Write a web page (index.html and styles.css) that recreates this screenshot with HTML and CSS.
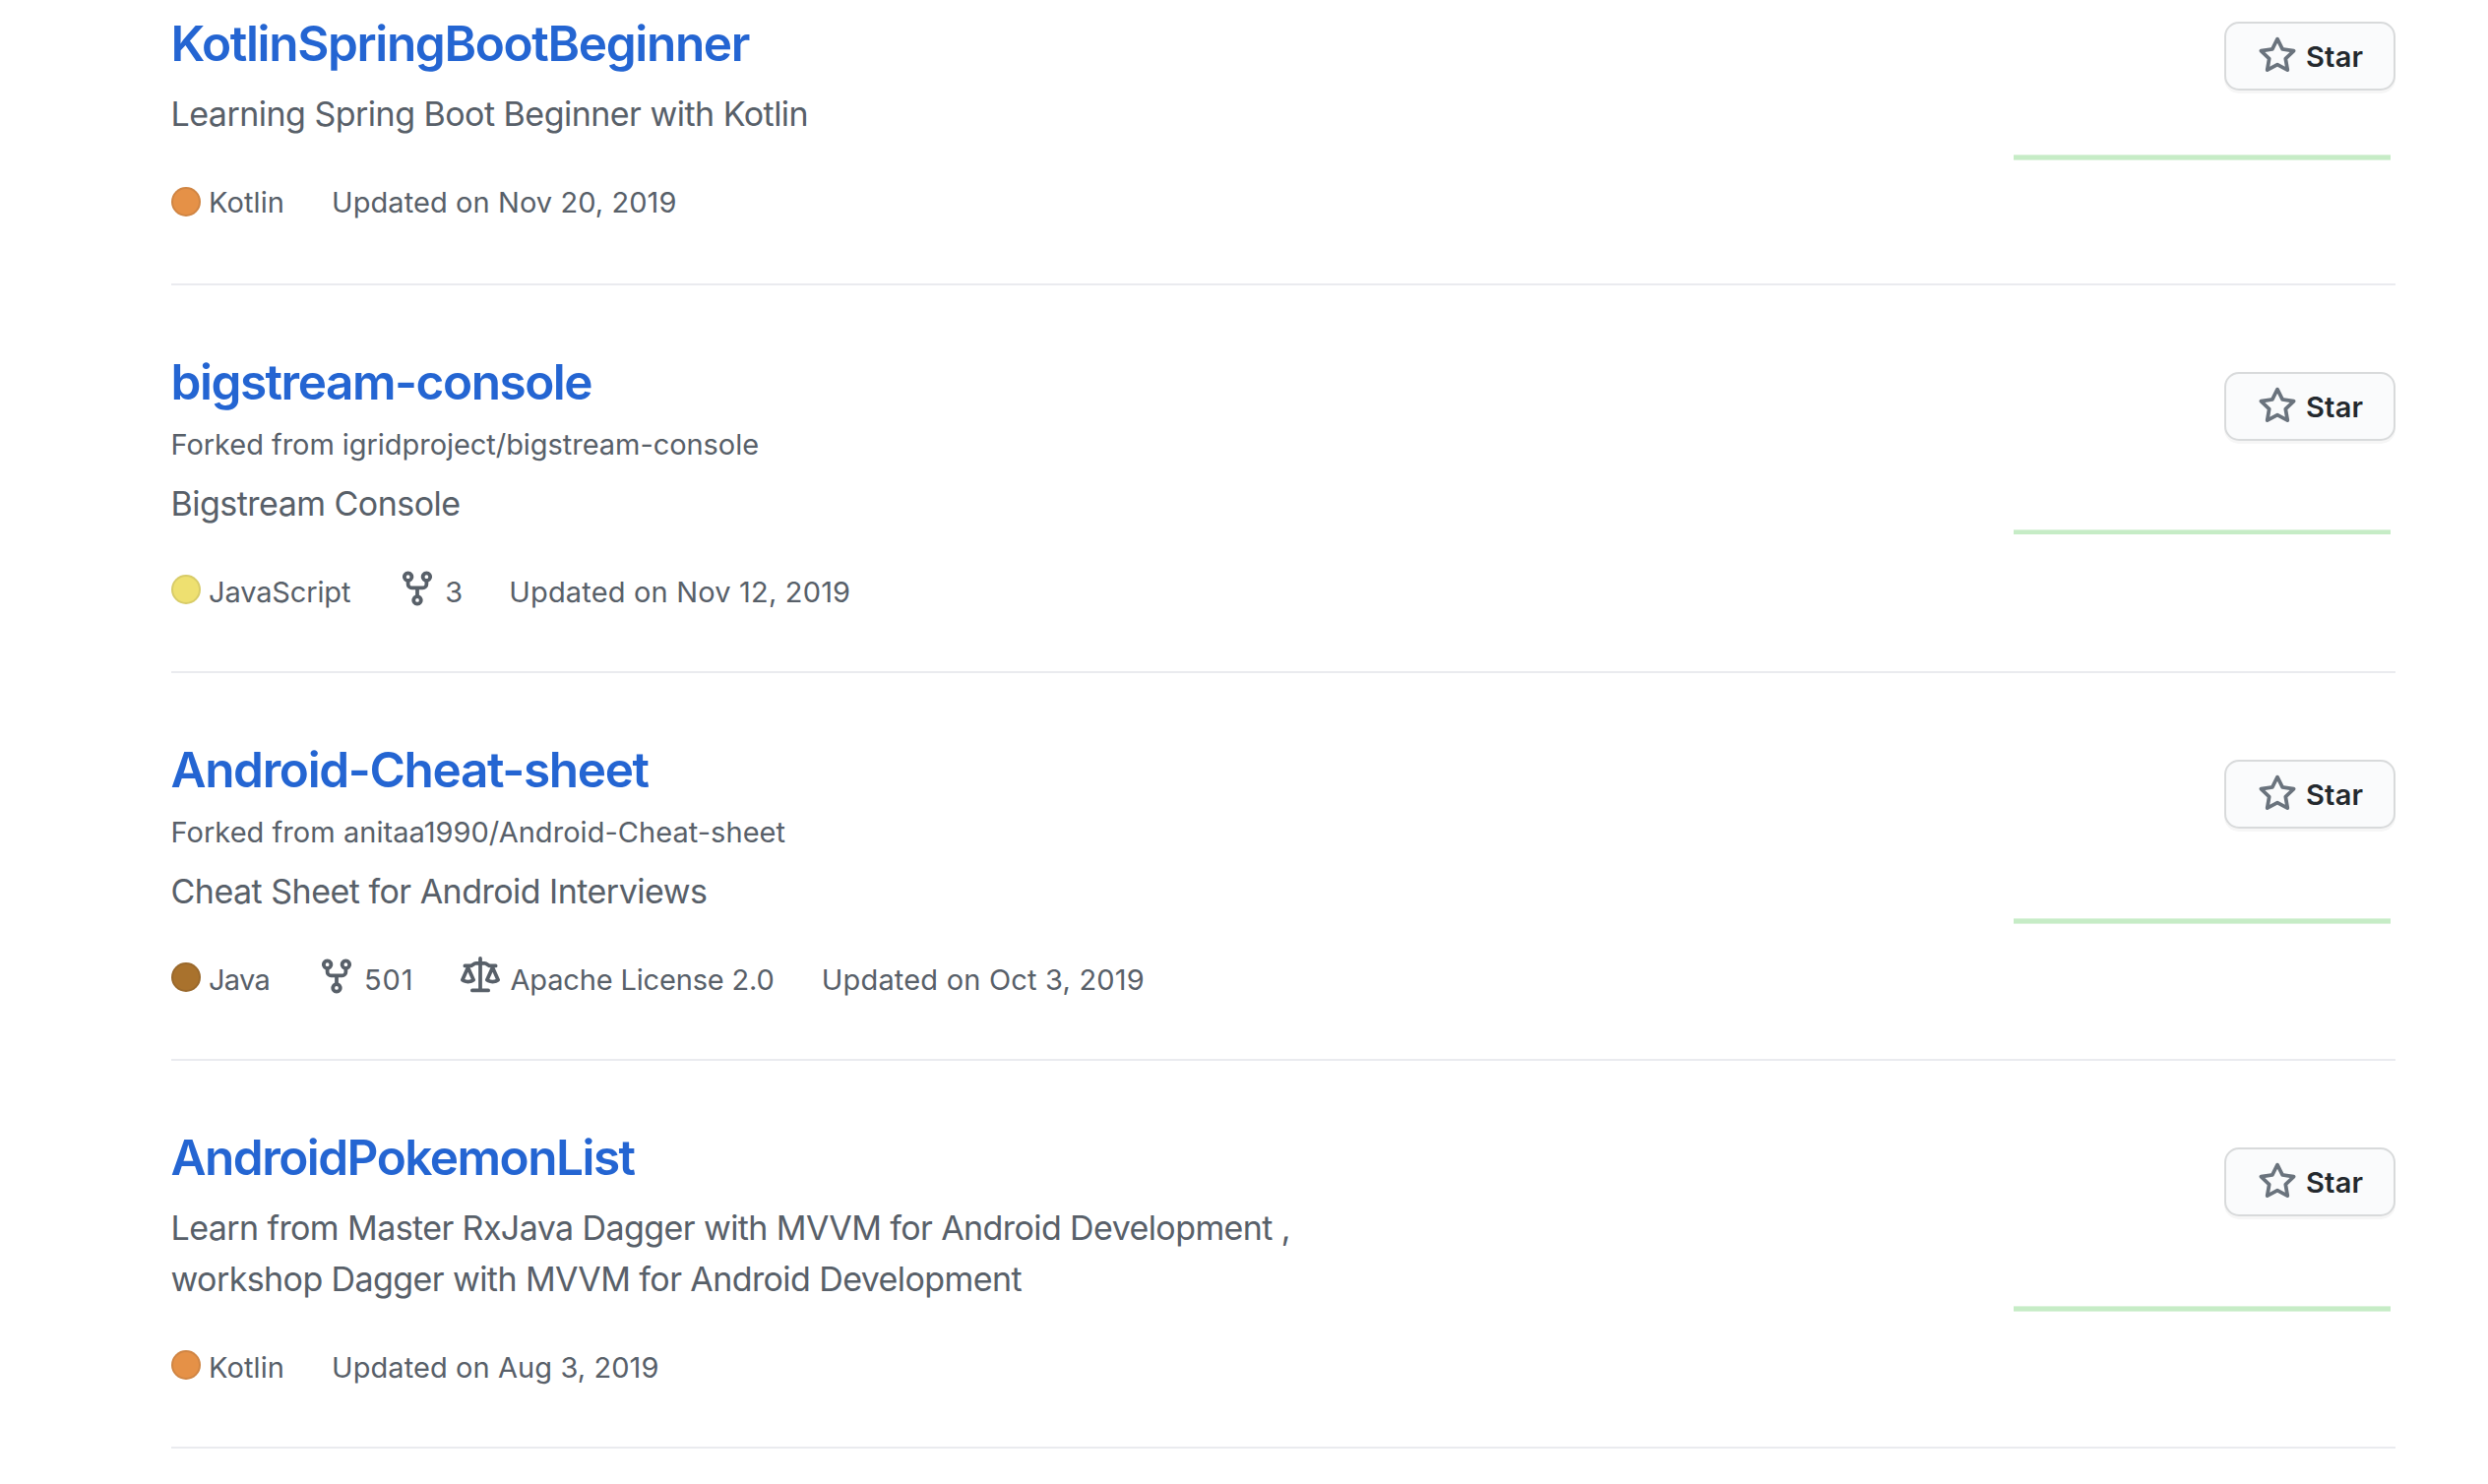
FILE: index.html
```html
<!DOCTYPE html>
<html lang="en">
<head>
<meta charset="utf-8">
<title>Repositories</title>
<link rel="stylesheet" href="styles.css">
</head>
<body>
<svg class="sprite" aria-hidden="true">
  <symbol id="star" viewBox="0 0 16 16"><path fill-rule="evenodd" d="M8 .25a.75.75 0 01.673.418l1.882 3.815 4.21.612a.75.75 0 01.416 1.279l-3.046 2.97.719 4.192a.75.75 0 01-1.088.791L8 12.347l-3.766 1.98a.75.75 0 01-1.088-.79l.72-4.194L.818 6.374a.75.75 0 01.416-1.28l4.21-.611L7.327.668A.75.75 0 018 .25zm0 2.445L6.615 5.5a.75.75 0 01-.564.41l-3.097.45 2.24 2.184a.75.75 0 01.216.664l-.528 3.084 2.769-1.456a.75.75 0 01.698 0l2.77 1.456-.53-3.084a.75.75 0 01.216-.664l2.24-2.183-3.096-.45a.75.75 0 01-.564-.41L8 2.694v.001z"/></symbol>
  <symbol id="fork" viewBox="0 0 16 16"><path fill-rule="evenodd" d="M5 3.25a.75.75 0 11-1.5 0 .75.75 0 011.5 0zm0 2.122a2.25 2.25 0 10-1.5 0v.878A2.25 2.25 0 005.75 8.5h1.5v2.128a2.251 2.251 0 101.5 0V8.5h1.5a2.25 2.25 0 002.25-2.25v-.878a2.25 2.25 0 10-1.5 0v.878a.75.75 0 01-.75.75h-4.5A.75.75 0 015 6.25v-.878zm3.75 7.378a.75.75 0 11-1.5 0 .75.75 0 011.5 0zm3-8.75a.75.75 0 100-1.5.75.75 0 000 1.5z"/></symbol>
  <symbol id="law" viewBox="0 0 16 16"><path fill-rule="evenodd" d="M8.75.75a.75.75 0 00-1.5 0V2h-.984c-.305 0-.604.08-.869.23l-1.288.737A.25.25 0 013.984 3H1.75a.75.75 0 000 1.5h.428L.066 9.192a.75.75 0 00.154.838l.53-.53-.53.53v.001l.002.002.002.002.006.006.016.015.045.04a3.514 3.514 0 00.686.45A4.492 4.492 0 003 11c.88 0 1.556-.22 2.023-.454a3.515 3.515 0 00.686-.45l.045-.04.016-.015.006-.006.002-.002.001-.002L5.25 9.5l.53.53a.75.75 0 00.154-.838L3.822 4.5h.162c.305 0 .604-.08.869-.23l1.289-.737a.25.25 0 01.124-.033h.984V13h-2.5a.75.75 0 000 1.5h6.5a.75.75 0 000-1.5h-2.5V3.5h.984a.25.25 0 01.124.033l1.29.736c.264.152.563.231.868.231h.162l-2.112 4.692a.75.75 0 00.154.838l.53-.53-.53.53v.001l.002.002.002.002.006.006.016.015.045.04a3.517 3.517 0 00.686.45A4.492 4.492 0 0013 11c.88 0 1.556-.22 2.023-.454a3.512 3.512 0 00.686-.45l.045-.04.01-.01.006-.005.006-.006.002-.002.001-.002-.529-.531.53.53a.75.75 0 00.154-.838L13.823 4.5h.427a.75.75 0 000-1.5h-2.234a.25.25 0 01-.124-.033l-1.29-.736A1.75 1.75 0 009.735 2H8.75V.75zM1.695 9.227c.285.135.718.273 1.305.273s1.02-.138 1.305-.273L3 6.327l-1.305 2.9zm10 0c.285.135.718.273 1.305.273s1.02-.138 1.305-.273L13 6.327l-1.305 2.9z"/></symbol>
</svg>
<ul class="repos">
  <li class="repo repo--first">
    <div class="info">
      <h3 class="name"><a href="#">KotlinSpringBootBeginner</a></h3>
      <p class="desc">Learning Spring Boot Beginner with Kotlin</p>
      <div class="meta">
        <span class="lang"><i class="dot dot--kotlin"></i><span class="kotlin">Kotlin</span></span>
        <span class="date">Updated on Nov 20, 2019</span>
      </div>
    </div>
    <div class="side">
      <button class="star"><svg class="icon"><use href="#star"/></svg><span class="label">Star</span></button>
      <div class="activity"></div>
    </div>
  </li>
  <li class="repo repo--console">
    <div class="info">
      <h3 class="name"><a href="#">bigstream-console</a></h3>
      <p class="forked">Forked from igridproject/bigstream-console</p>
      <p class="desc">Bigstream Console</p>
      <div class="meta">
        <span class="lang"><i class="dot dot--js"></i><span class="js">JavaScript</span></span>
        <span class="stat"><svg class="icon"><use href="#fork"/></svg>3</span>
        <span class="date">Updated on Nov 12, 2019</span>
      </div>
    </div>
    <div class="side">
      <button class="star"><svg class="icon"><use href="#star"/></svg><span class="label">Star</span></button>
      <div class="activity"></div>
    </div>
  </li>
  <li class="repo repo--cheat">
    <div class="info">
      <h3 class="name"><a href="#">Android-Cheat-sheet</a></h3>
      <p class="forked">Forked from anitaa1990/Android-Cheat-sheet</p>
      <p class="desc">Cheat Sheet for Android Interviews</p>
      <div class="meta">
        <span class="lang"><i class="dot dot--java"></i><span class="java">Java</span></span>
        <span class="stat forks"><svg class="icon"><use href="#fork"/></svg>501</span>
        <span class="stat license"><svg class="icon"><use href="#law"/></svg>Apache License 2.0</span>
        <span class="date">Updated on Oct 3, 2019</span>
      </div>
    </div>
    <div class="side">
      <button class="star"><svg class="icon"><use href="#star"/></svg><span class="label">Star</span></button>
      <div class="activity"></div>
    </div>
  </li>
  <li class="repo repo--pokemon">
    <div class="info">
      <h3 class="name"><a href="#">AndroidPokemonList</a></h3>
      <p class="desc">Learn from Master RxJava Dagger with MVVM for Android Development ,<br>workshop Dagger with MVVM for Android Development</p>
      <div class="meta">
        <span class="lang"><i class="dot dot--kotlin"></i><span class="kotlin">Kotlin</span></span>
        <span class="date">Updated on Aug 3, 2019</span>
      </div>
    </div>
    <div class="side">
      <button class="star"><svg class="icon"><use href="#star"/></svg><span class="label">Star</span></button>
      <div class="activity"></div>
    </div>
  </li>
</ul>
</body>
</html>
```
FILE: styles.css
```css
* { box-sizing: border-box; }

body {
  margin: 0;
  background: #fff;
  color: #586069;
  font-family: Inter, "Liberation Sans", sans-serif;
}

h3, p, ul { margin: 0; padding: 0; }

.sprite { display: none; }

.repos {
  width: 2260px;
  margin-left: 174px;
  list-style: none;
}

.repo {
  display: flex;
  justify-content: space-between;
  padding: 60px 0;
  border-bottom: 2px solid #eaebef;
}

.repo--first { padding: 6px 0 62px; }

.info { margin-left: -0.5px; }

.name {
  font-size: 49.5px;
  font-weight: 620;
  line-height: 76px;
  letter-spacing: -1.35px;
}

.name a { color: #2465d2; text-decoration: none; }

.repo--console .name { letter-spacing: -1.47px; }
.repo--pokemon .name { letter-spacing: -1.52px; }

.forked {
  margin-top: 4px;
  font-size: 29px;
  line-height: 44px;
}

.repo--console .forked { letter-spacing: -0.05px; }
.repo--cheat .forked { letter-spacing: 0.04px; }

.desc {
  margin-top: 8px;
  font-size: 34px;
  line-height: 52px;
  letter-spacing: -0.52px;
  white-space: nowrap;
}

.forked + .desc { margin-top: 12px; }
.repo--pokemon .desc { letter-spacing: -0.59px; }

.meta {
  display: flex;
  gap: 48px;
  height: 40px;
  margin: 44px 0 0 0.5px;
  font-size: 29px;
  line-height: 40px;
  white-space: nowrap;
}

.lang, .stat { display: flex; gap: 8px; }

.dot {
  width: 30px;
  height: 30px;
  margin-top: 2px;
  border: 2px solid rgba(27, 31, 35, 0.1);
  border-radius: 50%;
}

.repo--first .dot { margin-top: 4px; }

.dot--kotlin { background: #e59147; }
.dot--js { background: #eee070; }
.dot--java { background: #a9722d; }

.kotlin { letter-spacing: 0.1px; }
.js { letter-spacing: -0.14px; }
.java { letter-spacing: -0.7px; }
.date { letter-spacing: 0.08px; }
.forks { letter-spacing: 0.9px; }
.license { gap: 10px; letter-spacing: -0.16px; }
.repo--console .date { margin-left: -1px; letter-spacing: 0.18px; }
.repo--cheat .date { letter-spacing: 0.19px; }

.icon {
  width: 40px;
  height: 40px;
  flex: none;
  fill: currentColor;
}

.stat .icon { margin-top: -4px; }

.side {
  display: flex;
  flex-direction: column;
  align-items: flex-end;
  width: 388px;
  padding-top: 28px;
}

.repo--first .side { padding-top: 16px; }

.star {
  display: flex;
  align-items: center;
  gap: 9px;
  width: 174px;
  height: 70px;
  padding: 0 0 0 32px;
  border: 2px solid #d8dadb;
  border-radius: 15px;
  background: #fafbfc;
  box-shadow: 0 3px 0 rgba(27, 31, 35, 0.04);
  color: #24292e;
  font: 600 29px/40px Inter, "Liberation Sans", sans-serif;
  letter-spacing: 0.2px;
}

.star .icon { fill: #6a737d; }

.label { padding-top: 2px; }

.activity {
  align-self: flex-start;
  width: 383px;
  height: 6px;
  margin-top: 91px;
  border: solid #dcf3dc;
  border-width: 1px 0;
  background: #c6ecc6;
}

.repo--first .activity { margin-top: 65px; }

.repo--console .activity {
  height: 5px;
  margin-top: 90px;
  border-bottom: 0;
}
```
